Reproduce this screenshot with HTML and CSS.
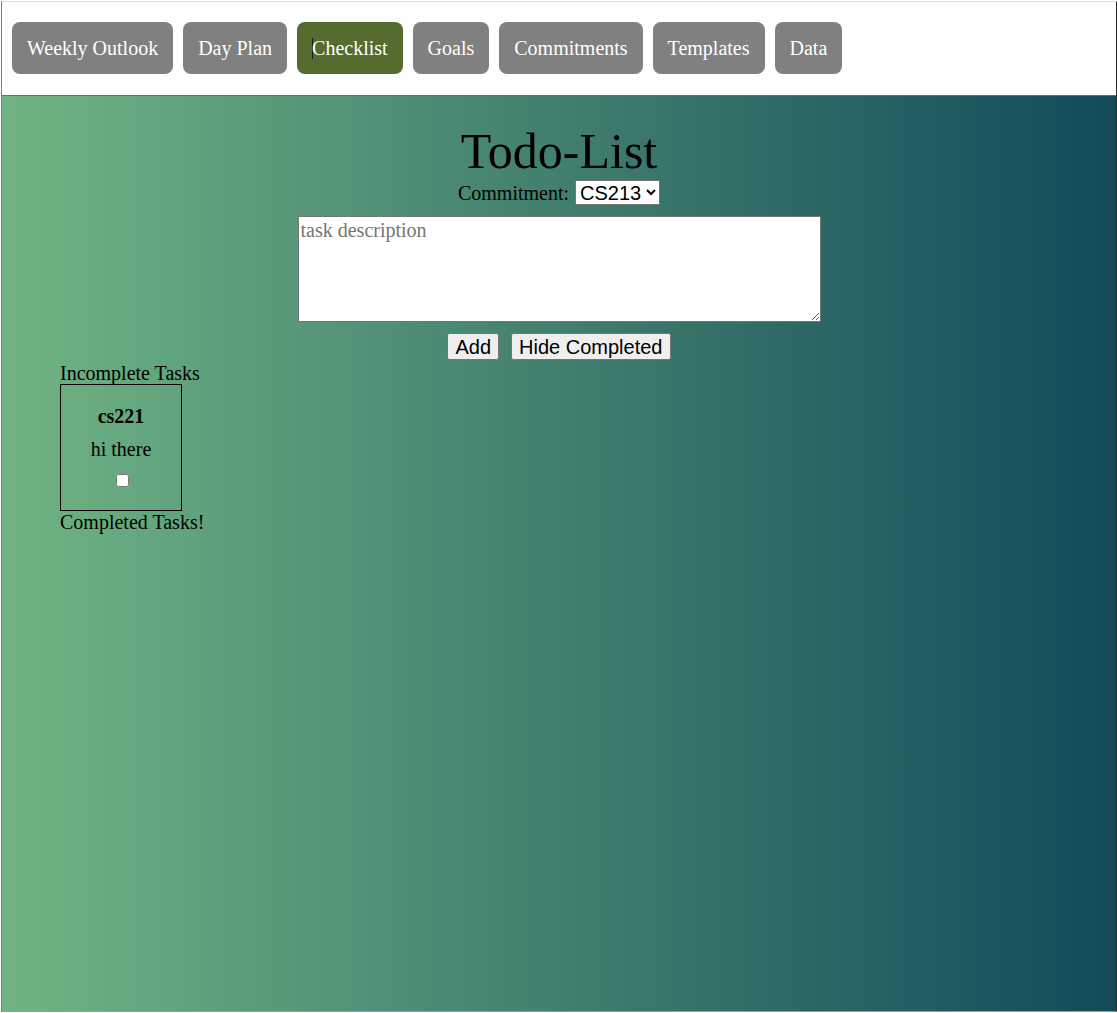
FILE: index.html
```html
<!DOCTYPE html>
<html>
<head>
<meta charset="utf-8">
<title>Todo-List</title>
<link rel="stylesheet" href="styles.css">
</head>
<body>
<div class="frame">
  <nav class="nav">
    <button class="nav-btn">Weekly Outlook</button>
    <button class="nav-btn">Day Plan</button>
    <button class="nav-btn active"><span class="caret"></span>Checklist</button>
    <button class="nav-btn">Goals</button>
    <button class="nav-btn">Commitments</button>
    <button class="nav-btn">Templates</button>
    <button class="nav-btn">Data</button>
  </nav>
  <main class="main">
    <section class="form">
      <h1 class="title">Todo-List</h1>
      <div class="commit-row">
        <label class="commit-label" for="commit">Commitment:</label>
        <select id="commit" class="commit-select">
          <option>CS213</option>
        </select>
      </div>
      <textarea class="desc" placeholder="task description"></textarea>
      <div class="actions">
        <button class="act-btn">Add</button>
        <button class="act-btn">Hide Completed</button>
      </div>
    </section>
    <section class="lists">
      <div class="list-label">Incomplete Tasks</div>
      <div class="card">
        <div class="card-title">cs221</div>
        <div class="card-desc">hi there</div>
        <input type="checkbox" class="card-check">
      </div>
      <div class="list-label">Completed Tasks!</div>
    </section>
  </main>
</div>
</body>
</html>
```

FILE: styles.css
```css
* {
  box-sizing: border-box;
}

html, body {
  margin: 0;
  padding: 0;
  background: #ffffff;
}

body {
  font-family: "Liberation Serif", "Times New Roman", serif;
  font-size: 20px;
  line-height: normal;
  color: #000;
}

.frame {
  margin: 1px 0 0 1px;
  width: 1116px;
  border-top: 1px solid #dcdcdc;
  border-left: 1px solid #7c7c7c;
  border-right: 1px solid #2a2a2a;
  border-bottom: 1px solid #9a9a9a;
}

.nav {
  display: flex;
  gap: 10px;
  height: 94px;
  padding: 20px 10px 0 10px;
  background: #ffffff;
  border-bottom: 1px solid #6e6e6e;
}

.nav-btn {
  font-family: "Liberation Serif", "Times New Roman", serif;
  font-size: 20px;
  line-height: 22px;
  height: 52px;
  padding: 15px 15px;
  color: #ffffff;
  background: #808080;
  border: none;
  border-radius: 8px;
  white-space: nowrap;
}

.nav-btn.active {
  background: #556b2f;
}

.caret {
  display: inline-block;
  width: 1px;
  height: 21px;
  margin-right: -1px;
  background: #1a1a1a;
  vertical-align: -4px;
}

.main {
  height: 915px;
  background: linear-gradient(to right, #70b483, #134a5a);
}

.form {
  display: flex;
  flex-direction: column;
  align-items: center;
  padding-top: 27px;
}

.title {
  margin: 0 0 1px 0;
  font-size: 50px;
  font-weight: normal;
  line-height: 56px;
  height: 56px;
}

.commit-row {
  display: flex;
  align-items: center;
  gap: 6px;
  height: 25px;
}

.commit-label {
  line-height: 22px;
}

.commit-select {
  font-family: "Liberation Sans", Arial, sans-serif;
  font-size: 20px;
  width: 85px;
  height: 25px;
  background: #ffffff;
  color: #000;
  border: 1px solid #767676;
  border-radius: 0;
}

.desc {
  display: block;
  margin: 11px 0 0 0;
  width: 523px;
  height: 106px;
  padding: 2px;
  font-family: "Liberation Serif", "Times New Roman", serif;
  font-size: 20px;
  border: 1px solid #767676;
  background: #ffffff;
}

.desc::placeholder {
  color: #757575;
}

.actions {
  display: flex;
  align-items: flex-start;
  gap: 12px;
  height: 27px;
  margin-top: 11px;
}

.act-btn {
  font-family: "Liberation Sans", Arial, sans-serif;
  font-size: 20px;
  line-height: 23px;
  height: 27px;
  padding: 1px 6px;
  margin: 0;
}

.lists {
  padding-top: 2px;
  padding-left: 58px;
}

.list-label {
  line-height: 22px;
}

.card {
  width: 122px;
  border: 1px solid #000;
  text-align: center;
  padding: 20px 0 23px 0;
}

.card-title {
  font-weight: bold;
  line-height: 22px;
}

.card-desc {
  margin-top: 11px;
  line-height: 22px;
}

.card-check {
  display: block;
  width: 13px;
  height: 13px;
  margin: 14px auto 0 auto;
  position: relative;
  left: 1px;
}
```
